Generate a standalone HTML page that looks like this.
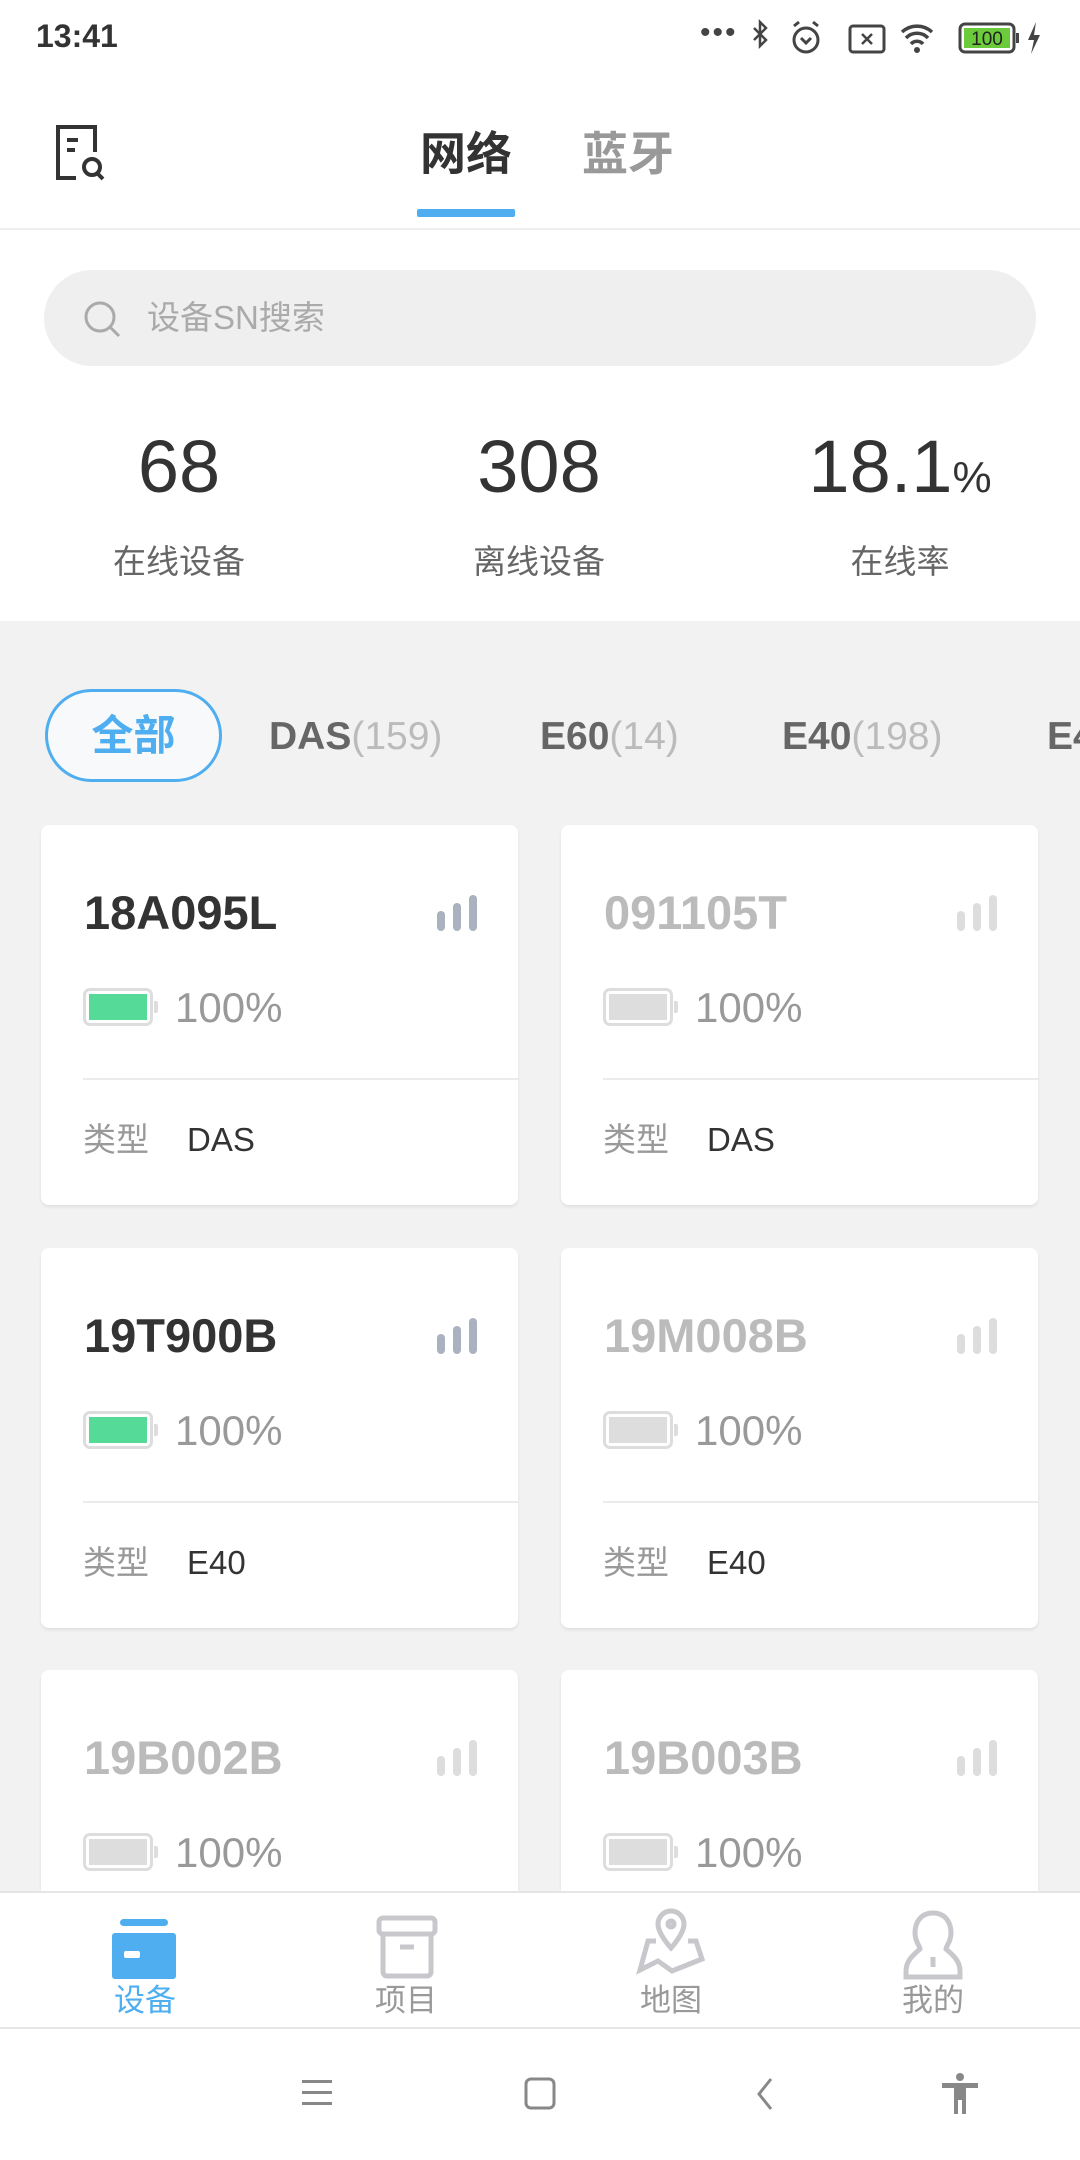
<!DOCTYPE html>
<html><head><meta charset="utf-8"><style>
*{margin:0;padding:0;box-sizing:border-box}
body{width:1080px;height:2160px;position:relative;background:#f2f2f2;font-family:"Liberation Sans","Noto Sans CJK SC",sans-serif;overflow:hidden}
.abs{position:absolute}
.white{background:#fff}
.card{position:absolute;width:477px;height:380px;background:#fff;border-radius:8px;box-shadow:0 2px 3px rgba(0,0,0,.08)}
.card .t{position:absolute;left:43px;top:60px;font-size:47px;color:#333;line-height:56px;font-weight:bold}
.card .sig{position:absolute;left:396px;top:70px}
.card .bat{position:absolute;left:42px;top:163px;width:70px;height:38px;border:3px solid #ddd;border-radius:7px}
.card .bat i{position:absolute;left:3px;top:3px;right:3px;bottom:3px;background:#55da98}
.card .bat:after{content:"";position:absolute;right:-8px;top:10px;width:4px;height:12px;background:#ddd;border-radius:0 2px 2px 0}
.card .p{position:absolute;left:134px;top:158px;font-size:42px;color:#999;line-height:50px}
.card .d{position:absolute;left:42px;right:0;top:253px;height:2px;background:#ebebeb}
.card .k{position:absolute;left:42px;top:295px;font-size:33px;color:#999;line-height:40px}
.card .v{position:absolute;left:146px;top:295px;font-size:33px;color:#333;line-height:40px}
.off .t{color:#bbb}.off .bat i{background:#ddd}
.nav{position:absolute;top:1891px;width:1080px;height:138px;background:#fff;border-top:2px solid #e5e5e5;border-bottom:2px solid #e5e5e5}
.nav div{position:absolute;top:82px;font-size:31px;color:#999;width:120px;text-align:center}
</style></head><body>
<div class="abs white" style="left:0;top:0;width:1080px;height:621px"></div>
<div class="abs" style="left:36px;top:18px;font-size:32px;color:#333;font-weight:bold">13:41</div>
<div class="abs" style="left:700px;top:16px;font-size:30px;color:#444;letter-spacing:2px">•••</div>
<svg class="abs" style="left:750px;top:18px" width="300" height="40" viewBox="0 0 300 40">
<path d="M4 10l12 12-6 6V4l6 6-12 12" fill="none" stroke="#444" stroke-width="2.5"/>
<circle cx="56" cy="22" r="12" fill="none" stroke="#444" stroke-width="3"/><path d="M51 20l5 5 5-5M44 8l5-4M68 8l-5-4" stroke="#444" stroke-width="3" fill="none"/>
<rect x="100" y="8" width="34" height="26" rx="3" fill="none" stroke="#444" stroke-width="3"/><path d="M112 16l10 10M122 16l-10 10" stroke="#444" stroke-width="2.5"/>
<path d="M152 14a22 22 0 0 1 30 0M156 20a15 15 0 0 1 22 0M161 26a8 8 0 0 1 12 0" fill="none" stroke="#444" stroke-width="3.5"/><circle cx="167" cy="32" r="3" fill="#444"/>
<rect x="210" y="6" width="54" height="28" rx="5" fill="none" stroke="#444" stroke-width="3"/><rect x="214" y="10" width="46" height="20" fill="#6ccb3b"/><text x="237" y="27" font-size="19" text-anchor="middle" fill="#222" font-family="Liberation Sans">100</text>
<rect x="266" y="15" width="3" height="10" fill="#444"/><path d="M286 4l-8 18h6l-3 14 9-19h-6z" fill="#444"/>
</svg>
<svg class="abs" style="left:55px;top:124px" width="52" height="58" viewBox="0 0 52 58"><path d="M40 28V3H3v51h18" fill="none" stroke="#333" stroke-width="4"/><path d="M12 16h11M12 26h8" stroke="#333" stroke-width="4"/><circle cx="37" cy="43" r="8" fill="none" stroke="#333" stroke-width="4"/><path d="M42 49l6 6" stroke="#333" stroke-width="4"/></svg>
<div class="abs" style="left:420px;top:124px;font-size:46px;color:#333;font-weight:bold;line-height:60px">网络</div>
<div class="abs" style="left:582px;top:124px;font-size:46px;color:#999;font-weight:bold;line-height:60px">蓝牙</div>
<div class="abs" style="left:417px;top:209px;width:98px;height:8px;background:#4faef0;border-radius:2px"></div>
<div class="abs" style="left:0;top:228px;width:1080px;height:2px;background:#eee"></div>
<div class="abs" style="left:44px;top:270px;width:992px;height:96px;border-radius:48px;background:#efefef"></div>
<svg class="abs" style="left:82px;top:299px" width="42" height="42"><circle cx="18" cy="18" r="14" fill="none" stroke="#aaa" stroke-width="3"/><path d="M28 28l9 9" stroke="#aaa" stroke-width="3"/></svg>
<div class="abs" style="left:147px;top:298px;font-size:33px;color:#aaa;line-height:40px">设备SN搜索</div>
<div class="abs" style="left:79px;top:425px;width:200px;text-align:center;font-size:74px;color:#333;line-height:84px">68</div>
<div class="abs" style="left:439px;top:425px;width:200px;text-align:center;font-size:74px;color:#333;line-height:84px">308</div>
<div class="abs" style="left:780px;top:425px;width:240px;text-align:center;font-size:74px;color:#333;line-height:84px">18.1<span style="font-size:44px">%</span></div>
<div class="abs" style="left:79px;top:535px;width:200px;text-align:center;font-size:33px;color:#666">在线设备</div>
<div class="abs" style="left:439px;top:535px;width:200px;text-align:center;font-size:33px;color:#666">离线设备</div>
<div class="abs" style="left:800px;top:535px;width:200px;text-align:center;font-size:33px;color:#666">在线率</div>
<div class="abs" style="left:45px;top:689px;width:177px;height:93px;border:3px solid #4faef0;border-radius:47px;background:#f7f9fb;text-align:center;line-height:87px;font-size:42px;color:#4faef0;font-weight:bold">全部</div>
<div class="abs" style="left:269px;top:712px;font-size:39px;color:#666;font-weight:bold;line-height:50px;white-space:nowrap">DAS<span style="color:#bbb;font-weight:normal">(159)</span></div>
<div class="abs" style="left:540px;top:712px;font-size:39px;color:#666;font-weight:bold;line-height:50px;white-space:nowrap">E60<span style="color:#bbb;font-weight:normal">(14)</span></div>
<div class="abs" style="left:782px;top:712px;font-size:39px;color:#666;font-weight:bold;line-height:50px;white-space:nowrap">E40<span style="color:#bbb;font-weight:normal">(198)</span></div>
<div class="abs" style="left:1047px;top:712px;font-size:39px;color:#666;font-weight:bold;line-height:50px;white-space:nowrap">E4</div>

<svg width="0" height="0" style="position:absolute"><defs><g id="sg"><rect x="0" y="16" width="8" height="20" rx="4"/><rect x="16" y="8" width="8" height="28" rx="4"/><rect x="32" y="0" width="8" height="36" rx="4"/></g></defs></svg>

<div class="card" style="left:41px;top:825px"><div class="t">18A095L</div><svg class="sig" width="42" height="38" fill="#aab2bf"><use href="#sg"/></svg><div class="bat"><i></i></div><div class="p">100%</div><div class="d"></div><div class="k">类型</div><div class="v">DAS</div></div>
<div class="card off" style="left:561px;top:825px"><div class="t">091105T</div><svg class="sig" width="42" height="38" fill="#ddd"><use href="#sg"/></svg><div class="bat"><i></i></div><div class="p">100%</div><div class="d"></div><div class="k">类型</div><div class="v">DAS</div></div>
<div class="card" style="left:41px;top:1248px"><div class="t">19T900B</div><svg class="sig" width="42" height="38" fill="#aab2bf"><use href="#sg"/></svg><div class="bat"><i></i></div><div class="p">100%</div><div class="d"></div><div class="k">类型</div><div class="v">E40</div></div>
<div class="card off" style="left:561px;top:1248px"><div class="t">19M008B</div><svg class="sig" width="42" height="38" fill="#ddd"><use href="#sg"/></svg><div class="bat"><i></i></div><div class="p">100%</div><div class="d"></div><div class="k">类型</div><div class="v">E40</div></div>
<div class="card off" style="left:41px;top:1670px"><div class="t">19B002B</div><svg class="sig" width="42" height="38" fill="#ddd"><use href="#sg"/></svg><div class="bat"><i></i></div><div class="p">100%</div></div>
<div class="card off" style="left:561px;top:1670px"><div class="t">19B003B</div><svg class="sig" width="42" height="38" fill="#ddd"><use href="#sg"/></svg><div class="bat"><i></i></div><div class="p">100%</div></div>

<div class="abs white" style="left:0;top:2029px;width:1080px;height:131px"></div>
<div class="nav">
<svg class="abs" style="left:112px;top:22px" width="66" height="66"><rect x="8" y="4" width="48" height="7" rx="3.5" fill="#4faef0"/><rect x="0" y="18" width="64" height="46" rx="3" fill="#4faef0"/><rect x="12" y="36" width="16" height="7" rx="2" fill="#fff"/></svg>
<div style="left:85px;color:#4faef0">设备</div>
<svg class="abs" style="left:376px;top:22px" width="64" height="66" fill="none" stroke="#c8c8cc" stroke-width="5"><rect x="3" y="3" width="56" height="16" rx="4"/><path d="M7 19v38a4 4 0 0 0 4 4h40a4 4 0 0 0 4-4V19"/><path d="M24 32h14"/></svg>
<div style="left:346px">项目</div>
<svg class="abs" style="left:636px;top:14px" width="70" height="74" fill="none" stroke="#c8c8cc" stroke-width="5"><path d="M35 4a13 13 0 0 1 13 13c0 10-13 24-13 24S22 27 22 17A13 13 0 0 1 35 4z"/><circle cx="35" cy="17" r="3"/><path d="M20 34h-8L4 63l18-9 14 10 30-12-6-18h-8"/></svg>
<div style="left:611px">地图</div>
<svg class="abs" style="left:902px;top:16px" width="62" height="72" fill="none" stroke="#c8c8cc" stroke-width="5"><path d="M31 4c-12 0-18 9-18 20 0 9 5 13 5 16-7 6-14 12-14 22v6h54v-6c0-10-7-16-14-22 0-3 5-7 5-16C49 13 43 4 31 4z"/><path d="M31 48v10"/></svg>
<div style="left:873px">我的</div>
</div>
<svg class="abs" style="left:300px;top:2078px" width="36" height="30" fill="#888"><rect x="2" y="2" width="30" height="3"/><rect x="2" y="13" width="30" height="3"/><rect x="2" y="24" width="30" height="3"/></svg>
<svg class="abs" style="left:523px;top:2076px" width="36" height="36"><rect x="3" y="3" width="28" height="29" rx="5" fill="none" stroke="#888" stroke-width="3"/></svg>
<svg class="abs" style="left:753px;top:2076px" width="24" height="36"><path d="M18 3L6 18l12 15" fill="none" stroke="#888" stroke-width="3"/></svg>
<svg class="abs" style="left:940px;top:2072px" width="40" height="44" fill="#888"><circle cx="20" cy="5" r="4"/><rect x="2" y="11" width="36" height="5"/><rect x="14" y="11" width="12" height="17"/><rect x="14" y="26" width="4" height="16"/><rect x="22" y="26" width="4" height="16"/></svg>
</body></html>
